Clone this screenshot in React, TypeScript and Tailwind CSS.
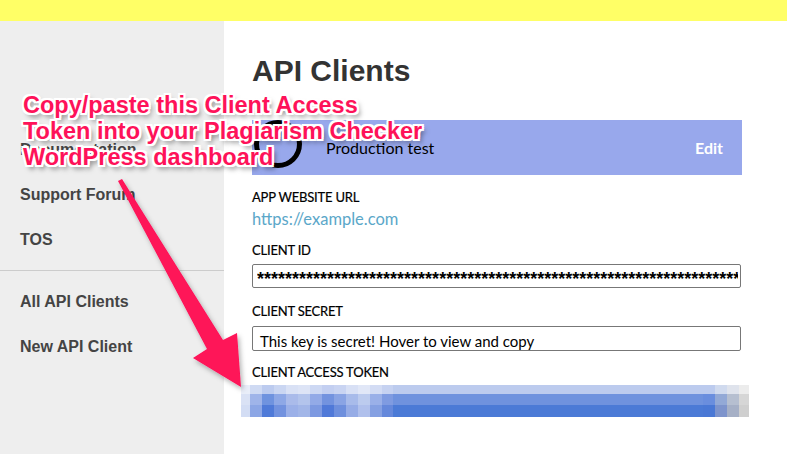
import React from 'react';

const sideTop = ['Documentation', 'Support Forum', 'TOS'];
const sideBottom = ['All API Clients', 'New API Client'];

// pixelated (blurred) token, column by column: width + three row colours
const tokenCols = [
  { w: 'w-[9px]', c: ['bg-[#e9eef9]', 'bg-[#dae2f5]', 'bg-[#d3ddf4]'] },
  { w: 'w-[12px]', c: ['bg-[#cfdaf3]', 'bg-[#9fb4e9]', 'bg-[#8ca6e5]'] },
  { w: 'w-[12px]', c: ['bg-[#bccbef]', 'bg-[#6f93df]', 'bg-[#4f7ad8]'] },
  { w: 'w-[12px]', c: ['bg-[#cad6f2]', 'bg-[#8ea8e6]', 'bg-[#7292df]'] },
  { w: 'w-[12px]', c: ['bg-[#d9e1f5]', 'bg-[#aabbea]', 'bg-[#9bb0e8]'] },
  { w: 'w-[12px]', c: ['bg-[#dde4f6]', 'bg-[#b3c4ec]', 'bg-[#a2b6e8]'] },
  { w: 'w-[12px]', c: ['bg-[#cdd8f3]', 'bg-[#93aae7]', 'bg-[#7d99e1]'] },
  { w: 'w-[12px]', c: ['bg-[#c3cff1]', 'bg-[#7393df]', 'bg-[#5079d8]'] },
  { w: 'w-[12px]', c: ['bg-[#c9d4f2]', 'bg-[#8aa4e4]', 'bg-[#6e8fdd]'] },
  { w: 'w-[12px]', c: ['bg-[#d8e0f5]', 'bg-[#a8bbea]', 'bg-[#96ace6]'] },
  { w: 'w-[12px]', c: ['bg-[#e1e7f7]', 'bg-[#bccbee]', 'bg-[#b0c0ec]'] },
  { w: 'w-[12px]', c: ['bg-[#d3dcf4]', 'bg-[#9ab0e8]', 'bg-[#85a0e2]'] },
  { w: 'w-[11px]', c: ['bg-[#c6d2f1]', 'bg-[#7f9be1]', 'bg-[#6588db]'] },
  { w: 'w-[310px]', c: ['bg-[#bccbee]', 'bg-[#6f92de]', 'bg-[#4b7ad6]'] },
  { w: 'w-[12px]', c: ['bg-[#bccbee]', 'bg-[#6a8ede]', 'bg-[#4a78d5]'] },
  { w: 'w-[12px]', c: ['bg-[#d0daee]', 'bg-[#93a9d6]', 'bg-[#7e94cc]'] },
  { w: 'w-[12px]', c: ['bg-[#dfe3ec]', 'bg-[#b6bfd0]', 'bg-[#a6b0c6]'] },
  { w: 'w-[10px]', c: ['bg-[#ececec]', 'bg-[#d6d6d6]', 'bg-[#cfcfcf]'] },
];

const rowH = ['h-[9px]', 'h-[11px]', 'h-[12px]'];

const Label = ({ children, className = '' }: { children: React.ReactNode; className?: string }) => (
  <div className={`text-[13px] leading-[16px] text-black tracking-[-0.2px] [-webkit-text-stroke:0.2px_#000] ${className}`}>{children}</div>
);

export default function App() {
  return (
    <div className="relative w-[787px] h-[454px] overflow-hidden bg-white font-['Lato',sans-serif]">
      <div className="h-[21px] bg-[#ffff66]" />
      <div className="flex h-[433px]">
        <aside className="w-[224px] shrink-0 bg-[#eeeeee] pt-[106px] font-['Liberation_Sans',Arial,sans-serif] text-[16px] font-bold text-[#444]">
          {sideTop.map((s) => (
            <div key={s} className="h-[45px] flex items-center px-[20px]">{s}</div>
          ))}
          <div className="my-[8px] h-px bg-[#cccccc]" />
          {sideBottom.map((s) => (
            <div key={s} className="h-[45px] flex items-center px-[20px]">{s}</div>
          ))}
        </aside>

        <main className="flex-1 pl-[28px] pt-[32px]">
          <h1 className="font-['Liberation_Sans',Arial,sans-serif] text-[30px] leading-[36px] font-bold text-[#333]">
            API Clients
          </h1>

          <div className="mt-[31px] w-[490px] h-[55px] bg-[#98a8ec] flex items-center">
            <svg width="50" height="50" viewBox="0 0 50 50" className="ml-[1px] -mt-[7px] shrink-0">
              <circle cx="25" cy="25" r="21.5" fill="none" stroke="#000" strokeWidth="5" />
            </svg>
            <span className="ml-[23px] text-[16px] leading-[20px] text-black">Production test</span>
            <span className="ml-auto mr-[19px] text-[16px] leading-[20px] font-bold text-white">Edit</span>
          </div>

          <Label className="mt-[14px]">APP WEBSITE URL</Label>
          <div className="mt-[4px] text-[16.5px] leading-[20px] text-[#5ba7c9]">https://example.com</div>

          <Label className="mt-[13px]">CLIENT ID</Label>
          <div className="mt-[6px] w-[489px] h-[24px] border border-[#777] rounded-[2px] flex items-center pl-[4px] pr-[2px] overflow-hidden">
            <span className="whitespace-nowrap overflow-hidden font-['Liberation_Sans',Arial,sans-serif] font-bold text-[18px] leading-[18px] pt-[5px] text-black">
              {'*'.repeat(70)}
            </span>
          </div>

          <Label className="mt-[15px]">CLIENT SECRET</Label>
          <div className="mt-[7px] w-[489px] h-[25px] border border-[#777] rounded-[2px] pl-[7px] pt-[4px] overflow-hidden">
            <div className="text-[15px] leading-[20px] text-black whitespace-nowrap">
              This key is secret! Hover to view and copy
            </div>
          </div>

          <Label className="mt-[13px]">CLIENT ACCESS TOKEN</Label>
          <div className="mt-[5px] -ml-[11px] flex">
            {tokenCols.map((col, i) => (
              <div key={i} className={`${col.w} flex flex-col`}>
                {col.c.map((c, j) => (
                  <div key={j} className={`${rowH[j]} ${c}`} />
                ))}
              </div>
            ))}
          </div>
        </main>
      </div>

      {/* annotation overlay */}
      <svg className="absolute left-0 top-0 pointer-events-none" width="787" height="454" viewBox="0 0 787 454">
        <defs>
          <filter id="sh" x="-20%" y="-20%" width="140%" height="140%">
            <feDropShadow dx="2" dy="3" stdDeviation="2.5" floodColor="#000" floodOpacity="0.3" />
          </filter>
        </defs>
        <polygon
          filter="url(#sh)"
          fill="#fe1259"
          points="118,181 122,179 223,340 237,333 241,387 193,358 207,349"
        />
      </svg>
      <div className="absolute left-[23px] top-[92px] font-['Liberation_Sans',Arial,sans-serif] text-[23.5px] leading-[26px] font-bold text-[#fe1259] whitespace-nowrap [text-shadow:-2px_-2px_0_#fff,2px_-2px_0_#fff,-2px_2px_0_#fff,2px_2px_0_#fff,0_-2px_0_#fff,0_2px_0_#fff,-2px_0_0_#fff,2px_0_0_#fff,3px_4px_5px_rgba(0,0,0,0.5)]">
        <div>Copy/paste this Client Access</div>
        <div>Token into your Plagiarism Checker</div>
        <div>WordPress dashboard</div>
      </div>
    </div>
  );
}
